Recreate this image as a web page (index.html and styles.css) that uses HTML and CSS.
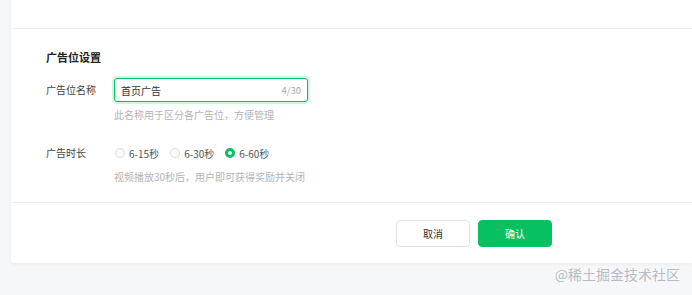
FILE: index.html
```html
<!DOCTYPE html>
<html lang="zh-CN">
<head>
	<meta charset="UTF-8">
	<meta name="viewport" content="width=device-width, initial-scale=1.0">
	<title>广告位设置</title>

	<link rel="stylesheet" href="styles.css">

</head>
<body>

	<div class="ad-card">
		<div class="ad-card-head"></div>

		<form class="ad-form" method="POST" action="index.html">
			<h2 class="ad-form-title">广告位设置</h2>

			<div class="ad-form-row">
				<label for="ad_name" class="ad-form-label">广告位名称</label>
				<div class="ad-form-control">
					<div class="ad-input">
						<input type="text" id="ad_name" name="ad_name" value="首页广告" maxlength="30" />
						<span class="ad-input-count">4/30</span>
					</div>
					<p class="ad-form-hint">此名称用于区分各广告位，方便管理</p>
				</div>
			</div>

			<div class="ad-form-row ad-form-row-radio">
				<span class="ad-form-label">广告时长</span>
				<div class="ad-form-control">
					<div class="ad-radio-group">
						<label class="ad-radio">
							<input type="radio" name="ad_time" value="15" />
							<span class="ad-radio-dot"></span>
							<span class="ad-radio-text">6-15秒</span>
						</label>
						<label class="ad-radio">
							<input type="radio" name="ad_time" value="30" />
							<span class="ad-radio-dot"></span>
							<span class="ad-radio-text">6-30秒</span>
						</label>
						<label class="ad-radio">
							<input type="radio" name="ad_time" value="60" checked />
							<span class="ad-radio-dot"></span>
							<span class="ad-radio-text">6-60秒</span>
						</label>
					</div>
					<p class="ad-form-hint ad-form-hint-radio">视频播放30秒后，用户即可获得奖励并关闭</p>
				</div>
			</div>
		</form>

		<div class="ad-card-foot">
			<button type="button" class="ad-btn">取消</button>
			<button type="submit" class="ad-btn ad-btn-primary">确认</button>
		</div>
	</div>

	<div class="watermark">@稀土掘金技术社区</div>

</body>
</html>
```

FILE: styles.css
```css
body {
	margin: 0;
	background-color: #f6f7f9;
	font-family: "Noto Sans CJK SC", "Noto Sans", sans-serif;
	font-size: 10px;
	color: #333;
}

.ad-card {
	margin: -12px 0 0 11px;
	background-color: #ffffff;
	border-radius: 4px 0 0 4px;
	box-shadow: 0 1px 4px rgba(0, 0, 0, 0.06);
}
.ad-card-head {
	height: 40px;
	border-bottom: 1px solid #f0f0f0;
}

.ad-form {
	margin: 0;
	padding: 20px 35px 18px;
	border-bottom: 1px solid #f0f0f0;
}
.ad-form-title {
	margin: 0;
	font-size: 11px;
	line-height: 16px;
	font-weight: 700;
	color: #222;
}
.ad-form-row {
	display: flex;
	margin-top: 13px;
}
.ad-form-row-radio {
	margin-top: 23px;
}
.ad-form-label {
	width: 68px;
	flex-shrink: 0;
	line-height: 24px;
	color: #444;
}
.ad-form-row-radio .ad-form-label {
	line-height: 16px;
}

.ad-input {
	display: flex;
	align-items: center;
	width: 194px;
	height: 24px;
	box-sizing: border-box;
	padding: 0 6px;
	border: 1px solid #07c160;
	border-radius: 3px;
	box-shadow: 0 0 0 2px rgba(7, 193, 96, 0.18);
}
.ad-input input {
	flex: 1;
	min-width: 0;
	border: none;
	outline: none;
	padding: 0;
	font-family: inherit;
	font-size: 10px;
	color: #333;
	background: transparent;
}
.ad-input-count {
	color: #aaa;
	font-size: 9.5px;
}

.ad-form-hint {
	margin: 6px 0 0;
	line-height: 14px;
	color: #b4b4b4;
}
.ad-form-hint-radio {
	margin-top: 9px;
}

.ad-radio-group {
	display: flex;
	gap: 10px;
	height: 16px;
	align-items: center;
}
.ad-radio {
	display: flex;
	align-items: center;
	color: #555;
}
.ad-radio input {
	display: none;
}
.ad-radio-dot {
	width: 10px;
	height: 10px;
	box-sizing: border-box;
	border: 1px solid #dcdcdc;
	border-radius: 50%;
	background-color: #fafafa;
	margin: 0 4px 0 1px;
}
.ad-radio input:checked + .ad-radio-dot {
	border: 3px solid #07c160;
	background-color: #ffffff;
}

.ad-card-foot {
	display: flex;
	gap: 8px;
	padding: 17px 0 16px 385px;
}
.ad-btn {
	width: 74px;
	height: 27px;
	border: 1px solid #e3e3e3;
	border-radius: 4px;
	background-color: #ffffff;
	font-family: inherit;
	font-size: 10px;
	color: #333;
}
.ad-btn-primary {
	border-color: #07c160;
	background-color: #07c160;
	color: #ffffff;
}

.watermark {
	margin-top: 2px;
	padding-right: 12px;
	text-align: right;
	font-size: 14px;
	line-height: 18px;
	color: #b8bcc4;
}
```
